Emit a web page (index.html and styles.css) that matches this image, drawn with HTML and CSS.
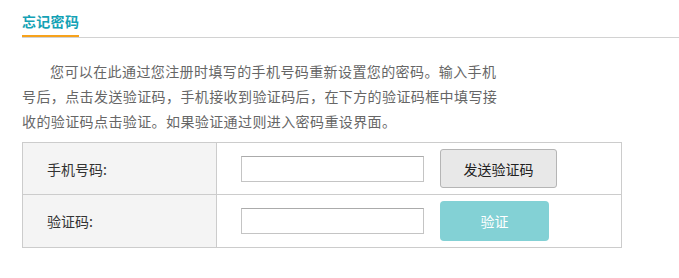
FILE: index.html
```html
<!DOCTYPE html>
<html lang="zh-CN">
<head>
<meta charset="utf-8">
<title>忘记密码</title>
<link rel="stylesheet" href="styles.css">
</head>
<body>
<div class="page">
  <div class="tabs">
    <div class="tab-title">忘记密码</div>
  </div>
  <p class="intro">您可以在此通过您注册时填写的手机号码重新设置您的密码。输入手机号后，点击发送验证码，手机接收到验证码后，在下方的验证码框中填写接收的验证码点击验证。如果验证通过则进入密码重设界面。</p>
  <div class="form-table">
    <div class="row row-first">
      <div class="label">手机号码:</div>
      <div class="value">
        <input class="field" type="text">
        <button class="btn btn-send" type="button">发送验证码</button>
      </div>
    </div>
    <div class="row row-second">
      <div class="label">验证码:</div>
      <div class="value">
        <input class="field" type="text">
        <button class="btn btn-verify" type="button">验证</button>
      </div>
    </div>
  </div>
</div>
</body>
</html>
```

FILE: styles.css
```css
html, body {
  margin: 0;
  padding: 0;
  background: #ffffff;
}

body {
  font-family: "Noto Sans CJK SC", "Liberation Sans", sans-serif;
  font-size: 14px;
  color: #333333;
}

.page {
  padding-left: 22px;
}

.tabs {
  display: flex;
  padding-top: 8px;
  border-bottom: 1px solid #d2d2d2;
}

.tab-title {
  font-size: 14px;
  font-weight: bold;
  line-height: 27px;
  letter-spacing: 0.3px;
  color: #14a2b5;
  border-bottom: 2px solid #f7a21b;
}

.intro {
  width: 480px;
  margin: 21px 0 0 0;
  text-indent: 28px;
  line-height: 25px;
  letter-spacing: 0.4px;
  color: #666666;
}

.form-table {
  width: 598px;
  margin-top: 8px;
  border: 1px solid #cccccc;
}

.row {
  display: grid;
  grid-template-columns: 194px 1fr;
}

.row-first {
  height: 51px;
  border-bottom: 1px solid #cccccc;
}

.row-second {
  height: 52px;
}

.label {
  display: flex;
  align-items: center;
  padding-left: 24px;
  background: #f4f4f4;
  border-right: 1px solid #cccccc;
  color: #333333;
}

.value {
  display: flex;
  align-items: center;
  padding-left: 24px;
}

.field {
  box-sizing: border-box;
  width: 183px;
  height: 26px;
  margin: 0 16px 0 0;
  padding: 0 4px;
  border: 1px solid #c4c4c4;
  border-top-color: #ababab;
  background: #ffffff;
  font: inherit;
  outline: none;
}

.btn {
  box-sizing: border-box;
  font-family: inherit;
  font-size: 14px;
  padding: 0;
  cursor: pointer;
}

.btn-send {
  width: 117px;
  height: 39px;
  background: #e8e8e8;
  border: 1px solid #b5b5b5;
  border-radius: 3px;
  color: #222222;
}

.btn-verify {
  width: 109px;
  height: 40px;
  background: #83d1d5;
  border: none;
  border-radius: 4px;
  color: #ffffff;
}
```
